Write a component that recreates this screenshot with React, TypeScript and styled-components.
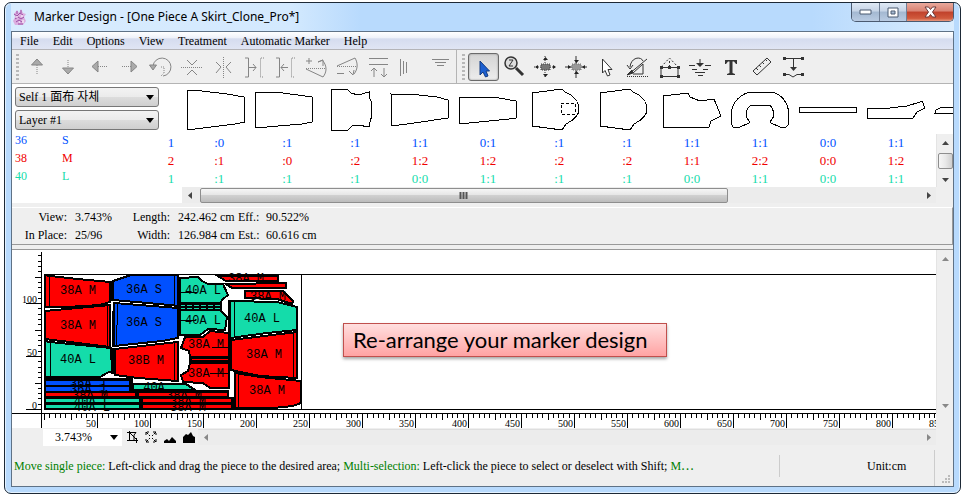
import React from "react";
import styled, { createGlobalStyle, css } from "styled-components";

const BLUE = "#0050ff";
const RED = "#ff0000";
const GREEN = "#14dcaa";

const GlobalStyle = createGlobalStyle`
  * { box-sizing: border-box; }
  body { margin: 0; background: #fff; }
  button, select { font: inherit; color: inherit; }
  svg { display: block; }
`;

/* ---------- window frame ---------- */

const Page = styled.div`
  display: flex;
  height: 100vh;
  min-height: 460px;
  padding: 2px 3px 2px 4px;
  font: 12px/18px "Liberation Serif", "Noto Sans CJK TC", serif;
  color: #000;
`;

const Frame = styled.div`
  flex: 1;
  min-width: 0;
  display: flex;
  flex-direction: column;
  padding: 0 6px 6px;
  border: 1px solid #1d2936;
  border-radius: 7px;
  background: #b8dafd;
  box-shadow: inset 0 0 0 1px #e4f2ff;
`;

const TitleBar = styled.header`
  display: flex;
  height: 28px;
  padding-left: 1px;
  background: linear-gradient(90deg, #d9ecfe 0, #d3e9fe 280px, #b8dafd 350px, #b8dafd 85%, #d9ecfe 100%);
`;

const Title = styled.h1`
  flex: 1;
  display: flex;
  align-items: center;
  gap: 7px;
  margin: 0;
  font: 12px/28px "Noto Sans", sans-serif;
  white-space: nowrap;
`;

const WindowButtons = styled.div`
  display: flex;
  height: 19px;
  border: 1px solid #4b5a70;
  border-top: 0;
  border-radius: 0 0 5px 5px;
  overflow: hidden;
`;

const WindowButton = styled.button<{ $close?: boolean }>`
  display: grid;
  place-items: center;
  width: ${(p) => (p.$close ? 47 : 27)}px;
  padding: 0;
  border: 0;
  border-left: ${(p) => (p.$close ? "1px solid #5c2a2a" : "0")};
  background: ${(p) =>
    p.$close
      ? "linear-gradient(#e9a99c 0, #d98272 45%, #c0412b 50%, #d0593c 85%, #e89a80 100%)"
      : "linear-gradient(#dfe9f5 0, #c6d4e6 45%, #a3b8d1 50%, #b9cbe2 100%)"};
  & + & { border-left: 1px solid #6f7f96; }
`;

const Client = styled.main`
  flex: 1;
  min-height: 0;
  display: flex;
  flex-direction: column;
  border: 1px solid #5f7286;
  background: #efefef;
`;

/* ---------- menu and toolbar ---------- */

const MenuBar = styled.nav`
  display: flex;
  gap: 14px;
  height: 18px;
  padding-left: 8px;
  border-bottom: 1px solid #b4b4b8;
  background: linear-gradient(#fff 0, #eef1f9 35%, #d5dcef 40%, #e0e5f4 100%);
`;

const MenuItem = styled.button`
  padding: 0;
  border: 0;
  background: none;
  line-height: 18px;
  white-space: nowrap;
`;

const ToolBar = styled.div`
  display: flex;
  height: 34px;
  border-bottom: 1px solid #b4b4b4;
  overflow: hidden;
`;

const ToolGroup = styled.div`
  display: flex;
  align-items: center;
  padding-left: 4px;
  & + & { padding-left: 5px; border-left: 1px solid #b4b4b4; }
`;

const Grip = styled.span`
  width: 3px;
  height: 26px;
  margin-right: 3px;
  background: repeating-linear-gradient(#b8b8b8 0 2px, transparent 2px 4px);
`;

const Tool = styled.button<{ $active?: boolean }>`
  width: 31px;
  height: 28px;
  padding: 0;
  border: 1px solid transparent;
  border-radius: 3px;
  background: none;
  ${(p) =>
    p.$active &&
    css`
      border-color: #6a6a6a;
      background: linear-gradient(#d4d4d4, #ededed);
      box-shadow: inset 0 0 2px #888;
    `}
  svg { margin: -1px 0 0 -1px; }
`;

/* ---------- piece panel ---------- */

const PiecePanel = styled.section`
  display: flex;
  height: 119px;
  background: #fff;
`;

const LayerPane = styled.div`
  flex: none;
  width: 148px;
  padding: 3px 1px 0 3px;
`;

const DropDown = styled.label<{ $plain?: boolean }>`
  display: grid;
  align-items: center;
  svg { grid-area: 1 / 1; justify-self: end; margin-right: ${(p) => (p.$plain ? 4 : 5)}px; pointer-events: none; }
  select {
    grid-area: 1 / 1;
    width: 100%;
    height: 20px;
    padding: 0 20px 0 3px;
    appearance: none;
    border: 1px solid #777;
    border-radius: 3px;
    background: linear-gradient(#f3f3f3 0, #ebebeb 50%, #dcdcdc 52%, #cfcfcf 100%);
  }
  & + & { margin-top: 3px; }
  ${(p) =>
    p.$plain &&
    css`
      width: 79px;
      select {
        height: 17px;
        padding: 0 20px 0 12px;
        border: 0;
        border-radius: 0;
        background: #fff;
        line-height: 17px;
      }
    `}
`;

const SizeTable = styled.table`
  width: 100%;
  margin-top: 1px;
  border-collapse: collapse;
  td { height: 18px; padding: 0; line-height: 18px; }
  td:first-child { width: 47px; }
`;

const SizeRow = styled.tr<{ $color: string }>`
  color: ${(p) => p.$color};
`;

const RatioPane = styled.div`
  flex: 1;
  min-width: 0;
  display: flex;
  flex-direction: column;
`;

const ShapeStrip = styled.div`
  display: flex;
  height: 50px;
  padding-left: 22px;
  overflow: hidden;
  svg { flex: none; }
`;

const RatioArea = styled.div`
  flex: 1;
  display: flex;
  min-height: 0;
`;

const RatioScroll = styled.div`
  flex: 1;
  min-width: 0;
  overflow: hidden;
`;

const RatioTable = styled.table`
  table-layout: fixed;
  width: 770px;
  border-collapse: collapse;
  font-size: 13px;
  td { height: 18px; padding: 0; line-height: 18px; text-align: center; }
  td:first-child { width: 22px; }
`;

const Half = styled.span<{ $left?: boolean }>`
  display: inline-block;
  width: 8px;
  text-align: ${(p) => (p.$left ? "right" : "left")};
`;

/* ---------- scroll bars ---------- */

const HBar = styled.div`
  flex: 1;
  display: flex;
  align-items: center;
  height: 16px;
  background: #ececec;
`;

const VBar = styled.div`
  display: flex;
  flex-direction: column;
  align-items: center;
  justify-content: space-between;
  flex: none;
  width: 17px;
  background: #efefef;
  border-left: 1px solid #e4e4e4;
`;

const ScrollArrow = styled.button`
  display: grid;
  place-items: center;
  width: 16px;
  height: 16px;
  padding: 0;
  border: 0;
  background: none;
`;

const Thumb = styled.div<{ $vertical?: boolean }>`
  display: grid;
  place-items: center;
  border: 1px solid #8e8e8e;
  border-radius: 2px;
  ${(p) =>
    p.$vertical
      ? css`
          width: 15px;
          height: 16px;
          background: linear-gradient(90deg, #f6f6f6 0, #e8e8e8 50%, #cfcfcf 100%);
        `
      : css`
          width: 70%;
          height: 15px;
          margin-left: 2px;
          margin-right: auto;
          background: linear-gradient(#f6f6f6 0, #e6e6e6 45%, #d0d0d0 50%, #bcbcbc 100%);
        `}
`;

const PaneFooter = styled.div`
  display: flex;
  padding-left: 22px;
  padding-right: 17px;
  background: #efefef;
  box-shadow: inset 22px 0 #fff;
`;

/* ---------- information rows ---------- */

const InfoBar = styled.dl`
  display: grid;
  grid-template-columns: 55px 44px 43px 52px 20px auto;
  column-gap: 8px;
  justify-content: start;
  align-content: center;
  margin: 4px 0 0;
  height: 38px;
  border-top: 1px solid #fff;
  border-right: 1px solid #999;
  border-bottom: 1px solid #999;
  white-space: nowrap;
  dt { text-align: right; line-height: 18px; }
  dd { margin: 0; line-height: 18px; }
`;

/* ---------- work area ---------- */

const WorkArea = styled.section`
  flex: 1;
  min-height: 0;
  display: grid;
  grid-template-columns: 30px minmax(0, 1fr) 17px;
  grid-template-rows: minmax(0, 1fr) 15px 18px;
  margin-top: 4px;
  border-top: 1px solid #999;
`;

const RulerBox = styled.div<{ $wide?: boolean }>`
  grid-column: ${(p) => (p.$wide ? "1 / 3" : "1")};
  background: #fff;
  overflow: hidden;
  svg { width: 100%; height: 100%; }
`;

const Plot = styled.div`
  position: relative;
  background: #fff;
  overflow: hidden;
  > svg { width: 100%; height: 100%; }
`;

const Callout = styled.p`
  position: absolute;
  left: 301px;
  top: 73px;
  width: 324px;
  margin: 0;
  padding-left: 9px;
  border: 1px solid #c0504d;
  background: linear-gradient(#ffdfdf, #ffa3a3);
  box-shadow: 0 2px 3px rgba(0, 0, 0, 0.35);
  font: 22px/32px Lato, sans-serif;
  white-space: nowrap;
`;

const ZoomBar = styled.div`
  grid-column: 1 / 3;
  display: flex;
  align-items: center;
  padding-left: 31px;
  ${HBar} { justify-content: space-between; border-top: 1px solid #dedede; }
`;

const ZoomButton = styled.button`
  width: 19px;
  height: 16px;
  padding: 0;
  border: 0;
  background: none;
`;

/* ---------- status bar ---------- */

const StatusBar = styled.footer`
  display: flex;
  align-items: center;
  height: 40px;
`;

const Hint = styled.p`
  flex: 1;
  min-width: 0;
  margin: 0;
  padding-left: 2px;
  white-space: nowrap;
  overflow: hidden;
  em { font-style: normal; color: #008000; }
`;

const Unit = styled.span`
  width: 155px;
  height: 22px;
  padding-left: 87px;
  border-left: 1px solid #ccc;
  line-height: 22px;
`;

const SizeGrip = styled.div`
  align-self: stretch;
  display: flex;
  align-items: flex-end;
  width: 19px;
  margin-top: 4px;
  padding: 0 0 2px 7px;
  border-left: 1px solid #ccc;
`;

/* ---------- drawings ---------- */

type Dir = "up" | "down" | "left" | "right";
const ARROWS: Record<Dir, string> = {
  up: "M0 6L3.5 2L7 6Z",
  down: "M0 2L3.5 6L7 2Z",
  left: "M5 0L1 3.5L5 7Z",
  right: "M2 0L6 3.5L2 7Z",
};
const Arrow = ({ dir, color = "#444" }: { dir: Dir; color?: string }) => (
  <svg width="7" height="7" aria-hidden="true"><path d={ARROWS[dir]} fill={color} /></svg>
);
const Caret = () => (
  <svg width="8" height="5" aria-hidden="true"><path d="M0 0H8L4 5Z" fill="#000" /></svg>
);

const AppIcon = () => (
  <svg width="15" height="16" viewBox="0 0 15 16" aria-hidden="true">
    <path d="M2 5L5 1L7 4L9 0L11 4L14 5L12 8L14 12L11 16H3L1 12L3 8Z" fill="#dcaee0" />
    <path d="M2 5L5 7L8 4L11 6M3 10L6 8L9 10L12 8M4 13L7 11L10 13M5 2V5M9 1V4M6 15H11" stroke="#9a4fa4" fill="none" />
    <path d="M4 8H6M9 7H11M7 13H8M11 11V14" stroke="#fff" />
  </svg>
);

const dot = { strokeDasharray: "1 1" };

const EDIT_TOOLS: [string, React.ReactNode][] = [
  ["Move up", <><path d="M15 6L9.500 12H20.500Z" fill="#aaa" /><path d="M15 12V21" {...dot} /></>],
  ["Move down", <><path d="M15 21L9.500 15H20.500Z" fill="#aaa" /><path d="M15 7V15" {...dot} /></>],
  ["Move left", <><path d="M8 13.500L14 8V19Z" fill="#aaa" /><path d="M14 13.500H23" {...dot} /></>],
  ["Move right", <><path d="M22 13.500L16 8V19Z" fill="#aaa" /><path d="M7 13.500H16" {...dot} /></>],
  ["Rotate", <><path d="M7 13A9 9 0 1 1 17 23" /><path d="M3.500 12H10.500L7 17Z" fill="#aaa" /><path d="M15 14H18V20L15 23" {...dot} /></>],
  ["Flip vertically", <><path d="M4 14.500H26" {...dot} /><path d="M10 7L15 12L20 7M10 22L15 17L20 22" /></>],
  ["Flip horizontally", <><path d="M15.500 4V25" {...dot} /><path d="M8 9L13 14L8 20M23 9L18 14L23 20" /></>],
  ["Butt right", <><path d="M6 5H9.500V24H6M10 14.500H17M14 11L17 14.500L14 18" /><path d="M25 5H21.500V24H25" {...dot} /></>],
  ["Butt left", <><path d="M6 5H9.500V24H6M11 14.500H18M14 11L11 14.500L14 18" /><path d="M25 5H21.500V24H25" {...dot} /></>],
  ["Tilt up", <><path d="M5 8H11M8 5V11M5 16L22 24C26 19 26 13 22 8M22 13V7L17 9L22 7" /><path d="M5 15.500H25" {...dot} /></>],
  ["Tilt down", <><path d="M5 13L23 5C26 10 26 16 22 21M17 18L21 22L22 17M5 20.500H12" /><path d="M5 13.500H24" {...dot} /></>],
  ["Align", <path d="M6 5.500H25M6 11.500H25M11 24V15M8 18L11 15L14 18M21 15V24M18 21L21 24L24 21" />],
  ["Align vertically", <path d="M6.500 6V23M9.500 8V21M12.500 9V20" />],
  ["Filter", <path d="M7 6.500H24M10 9.500H21M12 12.500H19" />],
];

const FOUR_WAY = "M4 14H26M15 3V25";
const VIEW_TOOLS: [string, React.ReactNode][] = [
  ["Select", <path d="M12 8V22L15 19L17.500 24L20 23L18 18H21.500Z" fill="#1c5fd0" stroke="#123a80" />],
  ["Zoom", <><circle cx="12" cy="10" r="6" fill="#ddd" strokeWidth="1.500" /><path d="M10 7H14L10 13H14" /><path d="M17 15L24 22" strokeWidth="3" /></>],
  ["Spread", <><path d={FOUR_WAY} {...dot} /><path d="M11 11H20V17H11Z" fill="#777" stroke="#444" {...dot} /><path d="M5 14L8 12V16ZM26 14L23 12V16ZM15.500 4L13 7H18ZM15.500 24L13 21H18Z" fill="#222" stroke="none" /></>],
  ["Gather", <><path d={FOUR_WAY} /><path d="M11 11H20V17H11Z" fill="#999" stroke="#777" {...dot} /><path d="M10 14L7 12V16ZM21 14L24 12V16ZM15.500 10L13 7H18ZM15.500 18L13 21H18Z" fill="#222" stroke="none" /></>],
  ["Pick", <path d="M10.500 6V20L13 17.500L15.500 23L18 22L16 16.500H20Z" fill="#fff" />],
  ["Rotate free", <><path d="M7 14C8 4 18 3 20 8M4 12L7 16L10 12M6 21L24 6M10 20L20 11V21H10" /><path d="M4 22L9 17L10 20Z" fill="#333" /><path d="M4 23.500H26" {...dot} /></>],
  ["Measure piece", <><path d="M7 14.500H24V23.500H7Z" /><path d="M7 14L15.500 5L24 14M15.500 8V14" strokeDasharray="2 2" /><path d="M6 13H9V16H6ZM14 13H17V16H14ZM23 13H26V16H23ZM6 22H9V25H6ZM23 22H26V25H23Z" fill="#333" stroke="none" /></>],
  ["Drop", <><path d="M4 12.500H10M20 12.500H26M7 16.500H12M18 16.500H23M10 19.500H20M13 22.500H18M15 6V12" /><path d="M11 10H19L15 14Z" fill="#333" stroke="none" /></>],
  ["Text", <path d="M9 7H21V11H20L18 8.500H16.500V20L19 21V22H11V21L13.500 20V8.500H12L10 11H9Z" fill="#333" stroke="none" />],
  ["Ruler", <><path d="M6 18L20 5L24 9L10 22Z" fill="#eee" /><path d="M9 15L11 17M12 12L14 14M15 9L17 11M18 6L20 8" /></>],
  ["Spacing", <><path d="M5 5.500H25M15.500 6V15M6 21.500H11L15 24L19 21.500H25" /><path d="M12 14H19L15.500 18ZM5 4H8V7H5ZM23 4H26V7H23ZM5 20H8V23H5ZM23 20H26V23H23Z" fill="#333" stroke="none" /></>],
];

const SHAPES = [
  "M5 6L20 7L45 10L62 13L63 38L53 40L5 46Z",
  "M5 8L33 9L62 13V38L52 40L5 44Z",
  "M13 5H29L33 9L40 11L51 8V13L54 19L53 26L54 31L52 38L51 43L40 41L34 42L30 46H13Z",
  "M5 10L33 11L51 13L62 16V34L28 39L6 42Z",
  "M5 13L45 14L62 17V34L55 35L5 40Z",
  "M10 9L40 5L43 8C53 12 57 19 57 25C57 32 50 37 44 40L40 46L10 42Z",
  "M10 9L40 5L43 8C53 12 57 19 57 25C57 32 50 37 44 40L40 46L10 42Z",
  "M5 12L30 9L32 13L42 17L56 15L63 32L53 37L51 43H5Z",
  "M6 41L5 30C6 18 15 9 26 8H44C55 9 62 18 63 30L62 41C60 45 55 44 54 43L45 39C43 37 46 36 48 32C48 26 45 21 42 21H26C22 22 20 27 20 31C21 36 24 36 23 39L14 43C10 45 7 44 6 41Z",
  "M5 23H62V28H5Z",
  "M5 24H28L45 22L58 18L60 17L63 24L55 28L51 34H5Z",
  "M5 29L6 26L12 23H40V29Z",
];
const POCKET_SHAPE = 5;

const SIZES = [
  { no: "36", name: "S", color: BLUE, count: 1, ratios: [":0", ":1", ":1", "1:1", "0:1", ":1", ":1", "1:1", "1:1", "0:0", "1:1"] },
  { no: "38", name: "M", color: "#f00000", count: 2, ratios: [":1", ":0", ":2", "1:2", "1:2", ":2", ":2", "1:1", "2:2", "0:0", "1:2"] },
  { no: "40", name: "L", color: GREEN, count: 1, ratios: [":1", ":1", ":1", "0:0", "1:1", ":1", ":1", "0:0", "1:1", "0:0", "1:1"] },
];

/* Marker pieces, in plot pixels: fill, outline. */
const MARKER_PIECES: [string, string][] = [
  [RED, "M3 25L8 26L36 29L68 32V52L58 55L25 57H3Z"],
  [BLUE, "M71 31L89 25H136V56L128 55L71 50Z"],
  [RED, "M3 61L36 58L68 55V97L36 93L3 89Z"],
  [BLUE, "M72 53L136 58V88L120 91L72 96Z"],
  [GREEN, "M3 91L8 92L69 98L70 121L65 123L58 127H3Z"],
  [RED, "M73 99L136 92V131L96 128L73 125Z"],
  [BLUE, "M3 130H88V136H3Z"],
  [BLUE, "M3 136H88V142H3Z"],
  [RED, "M3 142H94V147H3Z"],
  [GREEN, "M3 148H98V153H3Z"],
  [GREEN, "M3 154H98V159H3Z"],
  [GREEN, "M91 134H144L153 140H91Z"],
  [RED, "M96 142H186V147H96Z"],
  [RED, "M100 148H190V153H100Z"],
  [RED, "M100 154H190V159H100Z"],
  [GREEN, "M138 28L156 27L160 31L166 34H181L186 45L181 49L178 53H138Z"],
  [GREEN, "M138 60H178L185 67L183 80L166 79L158 85H138Z"],
  [RED, "M139 98L143 87H161L168 81L187 83V107H148L147 101Z"],
  [RED, "M148 113H187V138H168L161 133L141 132L139 125L146 121Z"],
  [RED, "M176 26H236V31H184Z"],
  [RED, "M184 34L244 33V38H190Z"],
  [RED, "M203 41L241 41L251 51L250 54L235 49L203 48Z"],
  [GREEN, "M188 51L235 52L255 57V80L225 83L188 88Z"],
  [RED, "M189 90L255 82V128L218 126L189 120Z"],
  [RED, "M193 123L218 127L259 131V153L251 156L231 158H193Z"],
];
const PIECE_LINES =
  "M7 26V57M132 25V56M65 56V97M76 54L74 96M8 92V127M132 93V131M192 51V88M251 83V128M196 124V158M138 42H155M138 70H154M170 97H186M168 123H187";

const LABELS: [string, number, number][] = [
  ["38A M", 36, 44], ["36A S", 102, 43], ["38A M", 36, 79], ["36A S", 102, 76], ["40A L", 36, 113], ["38B M", 104, 114],
  ["40A L", 161, 44], ["40A L", 161, 74], ["38A M", 164, 98], ["38A M", 164, 127], ["38A M", 204, 32], ["38A M", 226, 50],
  ["40A L", 220, 72], ["38A M", 222, 108], ["38A M", 225, 144],
  ["36A J", 46, 137], ["36A J", 46, 143], ["38A M", 48, 149], ["40A L", 50, 155], ["40A L", 50, 161],
  ["40A", 112, 141], ["38A M", 142, 149], ["38A M", 146, 155], ["38A M", 146, 161],
];

const range = (n: number) => Array.from({ length: n }, (_, i) => i);

/* 50 cm on the rulers is 53 pixels. */
const STEP = 53;

const SideRuler = () => (
  <svg shapeRendering="crispEdges" fontSize="10" aria-hidden="true">
    <path d="M29.500 2V163" stroke="#000" />
    {range(30).map((i) => {
      const y = Math.round(159 - (i * STEP) / 10) + 0.5;
      return <path key={i} d={`M${i % 10 === 0 ? 14 : i % 5 === 0 ? 23 : 26} ${y}H29`} stroke="#000" />;
    })}
    {range(3).map((i) => (
      <text key={i} x="25" y={159 - i * STEP} textAnchor="end">{i * 50}</text>
    ))}
  </svg>
);

const BottomRuler = () => {
  const labels = Math.floor((window.innerWidth - 48) / STEP);
  return (
    <svg shapeRendering="crispEdges" fontSize="10" aria-hidden="true">
      <path d="M0 .5H4000M29.500 0V15" stroke="#000" />
      {range(labels * 10 + 5).map((i) => {
        const x = Math.round(32 + (i * STEP) / 10) + 0.5;
        return <path key={i} d={`M${x} 0V${i === 0 ? 7 : i % 10 === 0 ? 15 : i % 5 === 0 ? 7 : 5}`} stroke="#000" />;
      })}
      {range(labels).map((i) => (
        <text key={i} x={31 + (i + 1) * STEP} y="14" textAnchor="end">{(i + 1) * 50}</text>
      ))}
    </svg>
  );
};

const Marker = () => (
  <svg role="img" aria-label="Marker layout">
    <g shapeRendering="crispEdges" stroke="#000">
      <path d="M2.500 159V24.500H4000M2 159.500H4000M259.500 24V159" fill="none" />
      <path d="M2 128H90V135H98V140H186V147H192V159H2Z" />
      <path d="M137 52H179V61H137ZM147 106H187V114H147Z" />
      <path d="M138 55.500H178M138 58.500H178" stroke={GREEN} strokeDasharray="5 2" />
      <path d="M150 109.500H187" stroke={RED} />
      {MARKER_PIECES.map(([fill, d], i) => <path key={i} d={d} fill={fill} strokeWidth="2" />)}
      <path d={PIECE_LINES} fill="none" />
      <path d="M69 31V51M70 98V124M71 61V97M187 50V120M137 27V85M188 121V90" strokeWidth="3" />
    </g>
    <g fontFamily="Liberation Mono, monospace" fontSize="12" textAnchor="middle">
      {LABELS.map(([text, x, y], i) => <text key={i} x={x} y={y}>{text}</text>)}
    </g>
  </svg>
);

const ZOOM_ICONS: [string, React.ReactNode][] = [
  ["Fit piece", <path d="M7.500 2V12M5 3.500H14L12 6V11.500H5M12 11.500H16M14.500 9V14M8 4L14 10" stroke="#000" fill="none" />],
  ["Fit all", <path d="M5 6V3H8M12 3H15V6M15 10V13H12M8 13H5V10M5 3L9 7M15 3L11 7M15 13L11 9M5 13L9 9" stroke="#000" fill="none" strokeDasharray="3 1" />],
  ["Zoom out", <path d="M4 14V12L7 10L9 12L12 8L16 12V14Z" />],
  ["Zoom in", <path d="M4 14V8L7 5L9 6L12 3L14 7L16 8V14Z" />],
];

export default function App() {
  return (
    <Page>
      <GlobalStyle />
      <Frame>
        <TitleBar>
          <Title><AppIcon />Marker Design - [One Piece A Skirt_Clone_Pro*]</Title>
          <WindowButtons>
            <WindowButton aria-label="Minimize">
              <svg width="13" height="6"><path d="M1 1H12V5H1Z" fill="#fff" stroke="#4b5a70" /></svg>
            </WindowButton>
            <WindowButton aria-label="Maximize">
              <svg width="12" height="11"><path d="M1 1H11V10H1ZM4 4V7H8V4Z" fill="#fff" stroke="#4b5a70" fillRule="evenodd" /></svg>
            </WindowButton>
            <WindowButton $close aria-label="Close">
              <svg width="13" height="12"><path d="M1 1H4.500L6.500 3.500L8.500 1H12L8.500 6L12 11H8.500L6.500 8.500L4.500 11H1L4.500 6Z" fill="#fff" stroke="#6b3a3a" /></svg>
            </WindowButton>
          </WindowButtons>
        </TitleBar>
        <Client>
          <MenuBar>
            {["File", "Edit", "Options", "View", "Treatment", "Automatic Marker", "Help"].map((m) => (
              <MenuItem key={m}>{m}</MenuItem>
            ))}
          </MenuBar>
          <ToolBar role="toolbar">
            <ToolGroup>
              <Grip />
              {EDIT_TOOLS.map(([name, icon]) => (
                <Tool key={name} aria-label={name}>
                  <svg width="31" height="28" fill="none" stroke="#858585">{icon}</svg>
                </Tool>
              ))}
            </ToolGroup>
            <ToolGroup>
              <Grip />
              {VIEW_TOOLS.map(([name, icon], i) => (
                <Tool key={name} aria-label={name} $active={i === 0}>
                  <svg width="31" height="28" fill="none" stroke="#333">{icon}</svg>
                </Tool>
              ))}
            </ToolGroup>
          </ToolBar>

          <PiecePanel>
            <LayerPane>
              <DropDown>
                <select aria-label="Fabric"><option>Self 1 面布 자체</option></select>
                <Caret />
              </DropDown>
              <DropDown>
                <select aria-label="Layer"><option>Layer #1</option></select>
                <Caret />
              </DropDown>
              <SizeTable>
                <tbody>
                  {SIZES.map((s) => (
                    <SizeRow key={s.no} $color={s.color}><td>{s.no}</td><td>{s.name}</td></SizeRow>
                  ))}
                </tbody>
              </SizeTable>
            </LayerPane>
            <RatioPane>
              <ShapeStrip>
                {SHAPES.map((d, i) => (
                  <svg key={i} width="68" height="50" fill="none" stroke="#000" shapeRendering="crispEdges">
                    <path d={d} />
                    {i === POCKET_SHAPE && <path d="M39 19H53V30H39Z" strokeDasharray="3 2" />}
                  </svg>
                ))}
              </ShapeStrip>
              <RatioArea>
                <RatioScroll>
                  <RatioTable>
                    <tbody>
                      {SIZES.map((s) => (
                        <SizeRow key={s.no} $color={s.color}>
                          <td>{s.count}</td>
                          {s.ratios.map((r, i) => {
                            const [a, b] = r.split(":");
                            return <td key={i}><Half $left>{a}</Half>:<Half>{b}</Half></td>;
                          })}
                        </SizeRow>
                      ))}
                    </tbody>
                  </RatioTable>
                </RatioScroll>
                <VBar>
                  <ScrollArrow aria-label="Scroll up"><Arrow dir="up" /></ScrollArrow>
                  <Thumb $vertical />
                  <ScrollArrow aria-label="Scroll down"><Arrow dir="down" /></ScrollArrow>
                </VBar>
              </RatioArea>
              <PaneFooter>
                <HBar>
                  <ScrollArrow aria-label="Scroll left"><Arrow dir="left" /></ScrollArrow>
                  <Thumb>
                    <svg width="9" height="7"><path d="M1.500 0V7M4.500 0V7M7.500 0V7" stroke="#555" strokeWidth="2" /></svg>
                  </Thumb>
                  <ScrollArrow aria-label="Scroll right"><Arrow dir="right" /></ScrollArrow>
                </HBar>
              </PaneFooter>
            </RatioPane>
          </PiecePanel>

          <InfoBar>
            <dt>View:</dt><dd>3.743%</dd>
            <dt>Length:</dt><dd>242.462 cm</dd>
            <dt>Eff.:</dt><dd>90.522%</dd>
            <dt>In Place:</dt><dd>25/96</dd>
            <dt>Width:</dt><dd>126.984 cm</dd>
            <dt>Est.:</dt><dd>60.616 cm</dd>
          </InfoBar>

          <WorkArea>
            <RulerBox><SideRuler /></RulerBox>
            <Plot>
              <Marker />
              <Callout>Re-arrange your marker design</Callout>
            </Plot>
            <VBar>
              <ScrollArrow aria-label="Scroll up"><Arrow dir="up" color="#888" /></ScrollArrow>
              <ScrollArrow aria-label="Scroll down"><Arrow dir="down" color="#888" /></ScrollArrow>
            </VBar>
            <RulerBox $wide><BottomRuler /></RulerBox>
            <span />
            <ZoomBar>
              <DropDown $plain>
                <select aria-label="Zoom level"><option>3.743%</option></select>
                <Caret />
              </DropDown>
              {ZOOM_ICONS.map(([name, icon]) => (
                <ZoomButton key={name} aria-label={name}><svg width="19" height="16">{icon}</svg></ZoomButton>
              ))}
              <HBar>
                <ScrollArrow aria-label="Scroll left"><Arrow dir="left" color="#888" /></ScrollArrow>
                <ScrollArrow aria-label="Scroll right"><Arrow dir="right" color="#888" /></ScrollArrow>
              </HBar>
            </ZoomBar>
          </WorkArea>

          <StatusBar>
            <Hint>
              <em>Move single piece:</em> Left-click and drag the piece to the desired area; <em>Multi-selection:</em> Left-click
              the piece to select or deselect with Shift; <em>M⋯</em>
            </Hint>
            <Unit>Unit:cm</Unit>
            <SizeGrip>
              <svg width="9" height="9"><path d="M6 0H8V2H6ZM3 3H5V5H3ZM6 3H8V5H6ZM0 6H2V8H0ZM3 6H5V8H3ZM6 6H8V8H6Z" fill="#bbb" /></svg>
            </SizeGrip>
          </StatusBar>
        </Client>
      </Frame>
    </Page>
  );
}
